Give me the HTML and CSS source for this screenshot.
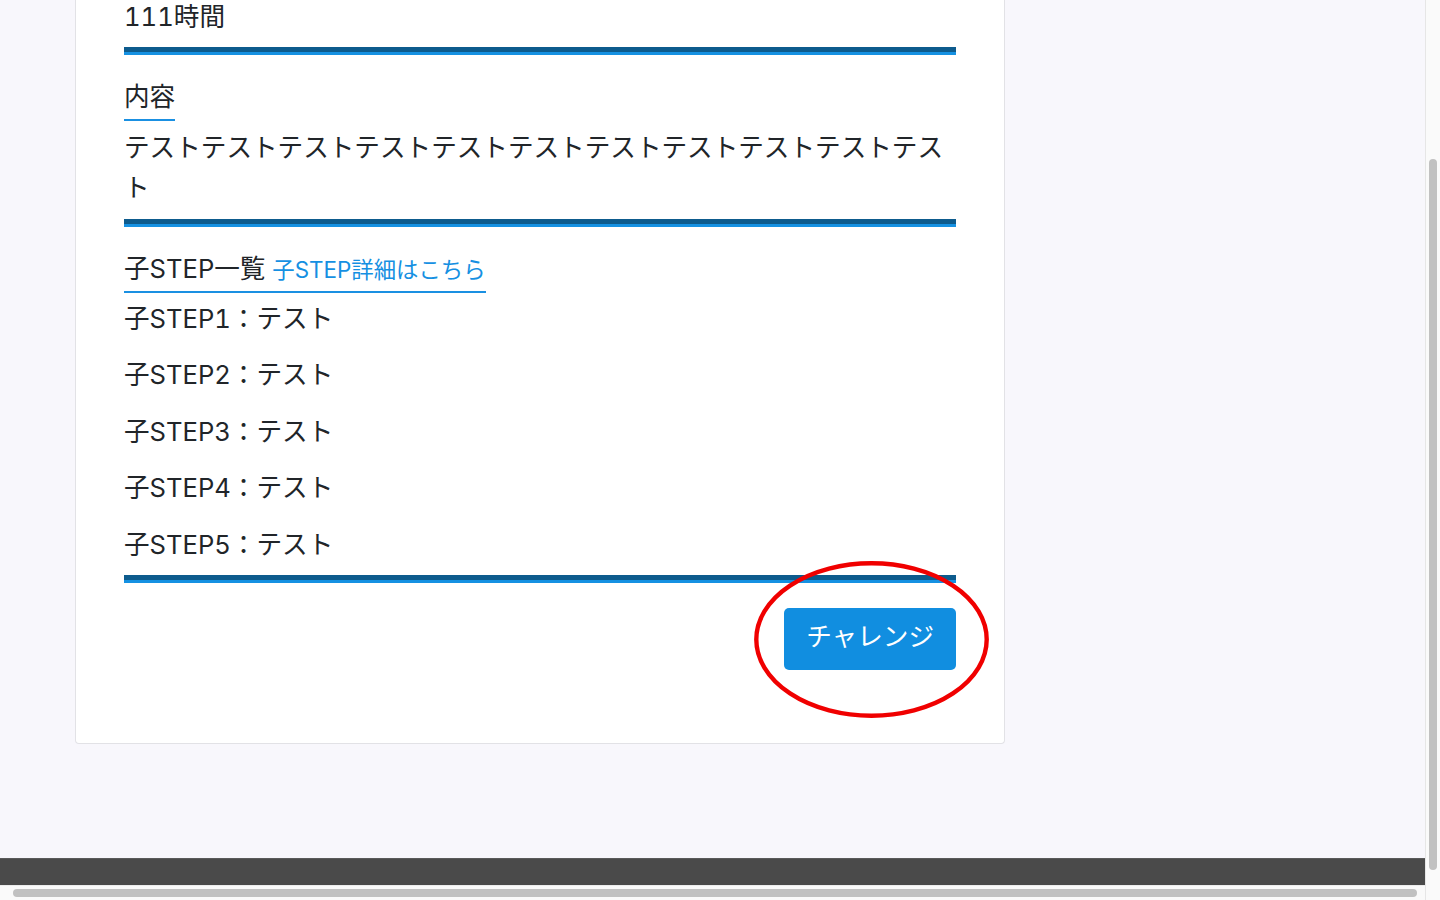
FILE: index.html
```html
<!DOCTYPE html>
<html lang="ja">
<head>
<meta charset="utf-8">
<title>STEP詳細</title>
<link rel="stylesheet" href="styles.css">
</head>
<body>
<div class="window">
  <div class="viewport">
    <main class="page">
      <div class="container">
        <section class="card">
          <div class="field">
            <p class="value">111時間</p>
          </div>
          <div class="divider"></div>
          <div class="field">
            <h3 class="label">内容</h3>
            <p class="value value-text">テストテストテストテストテストテストテストテストテストテストテスト</p>
          </div>
          <div class="divider"></div>
          <div class="field">
            <h3 class="label label-steps">子STEP一覧 <a class="link" href="#">子STEP詳細はこちら</a></h3>
            <ul class="steps">
              <li>子STEP1：テスト</li>
              <li>子STEP2：テスト</li>
              <li>子STEP3：テスト</li>
              <li>子STEP4：テスト</li>
              <li>子STEP5：テスト</li>
            </ul>
          </div>
          <div class="divider divider-last"></div>
          <div class="actions">
            <div class="btn-wrap">
              <button class="btn" type="button">チャレンジ</button>
              <svg class="circle" width="235" height="157" viewBox="0 0 235 157" aria-hidden="true">
                <ellipse cx="117.5" cy="78.5" rx="115.2" ry="76.2" fill="none" stroke="#f00000" stroke-width="4.4"/>
              </svg>
            </div>
          </div>
        </section>
      </div>
    </main>
    <footer class="footer"></footer>
  </div>
  <div class="vscroll"><div class="vthumb"></div></div>
  <div class="hscroll"><div class="hthumb"></div></div>
  <div class="corner"></div>
</div>
</body>
</html>
```

FILE: styles.css
```css
* { box-sizing: border-box; }

html, body {
  margin: 0;
  padding: 0;
  width: 1440px;
  height: 900px;
  overflow: hidden;
}

body {
  font-family: "Inter", "Noto Sans CJK JP", sans-serif;
  font-variant-numeric: tabular-nums;
  color: #212529;
  background: #f8f7fc;
}

.window {
  display: grid;
  grid-template-columns: 1425px 15px;
  grid-template-rows: 885px 15px;
  width: 1440px;
  height: 900px;
}

.viewport {
  display: flex;
  flex-direction: column;
  overflow: hidden;
  background: #f8f7fc;
}

.page {
  height: 858px;
  flex: none;
  overflow: hidden;
}

.container {
  padding-left: 75px;
}

.card {
  width: 930px;
  margin-top: -3px;
  background: #fff;
  border: 1px solid #e2e2e6;
  border-top: none;
  border-radius: 0 0 4px 4px;
  padding: 0 48px 73px 48px;
}

.field {
  display: flex;
  flex-direction: column;
  align-items: flex-start;
}

.value {
  margin: 0;
  font-size: 25.6px;
  line-height: 40.5px;
}

.value-text {
  margin-top: 6.5px;
  line-height: 40px;
  word-break: break-all;
}

.label {
  margin: 22px 0 0 0;
  font-size: 25.6px;
  font-weight: 400;
  line-height: 40.5px;
  padding-bottom: 2px;
  border-bottom: 2px solid #1a90e2;
}

.label-steps {
  margin-top: 22px;
}

.link {
  color: #1590e2;
  text-decoration: none;
  font-size: 22.4px;
  line-height: 30px;
}

.divider {
  height: 8px;
  margin-top: 9px;
  border-top: 5px solid #0d5b8d;
  border-bottom: 3px solid #1591e2;
}

.field + .divider {
  margin-top: 11px;
}

.field:first-child + .divider {
  margin-top: 9px;
}

.field + .divider-last {
  margin-top: 10px;
}

.steps {
  list-style: none;
  margin: 5.5px 0 0 0;
  padding: 0;
  display: flex;
  flex-direction: column;
  gap: 16px;
}

.steps li {
  font-size: 25.6px;
  line-height: 40.5px;
}

.actions {
  display: flex;
  justify-content: flex-end;
  padding-top: 25px;
}

.btn-wrap {
  position: relative;
}

.btn {
  display: block;
  height: 62px;
  padding: 0 22px 4px;
  border: none;
  border-radius: 5px;
  background: #118ee0;
  color: #fff;
  font-family: "Inter", "Noto Sans CJK JP", sans-serif;
  font-size: 25.6px;
  line-height: 40px;
}

.circle {
  position: absolute;
  left: -30px;
  top: -47px;
  pointer-events: none;
}

.footer {
  height: 27px;
  flex: none;
  background: #4a4a4a;
  border-top: 1px solid #5a5a5a;
}

.vscroll {
  grid-column: 2;
  grid-row: 1;
  background: #fafafa;
  border-left: 1px solid #e6e6e6;
  padding: 159px 3px 15px 3px;
  display: flex;
}

.vthumb {
  width: 8px;
  height: 711px;
  border-radius: 4px;
  background: #c1c1c1;
}

.hscroll {
  grid-column: 1;
  grid-row: 2;
  background: #fafafa;
  border-top: 1px solid #ececec;
  padding: 3px 8px 0 13px;
}

.hthumb {
  width: 1404px;
  height: 8px;
  border-radius: 4px;
  background: #c1c1c1;
}

.corner {
  grid-column: 2;
  grid-row: 2;
  background: #fafafa;
  border-left: 1px solid #e6e6e6;
}
```
